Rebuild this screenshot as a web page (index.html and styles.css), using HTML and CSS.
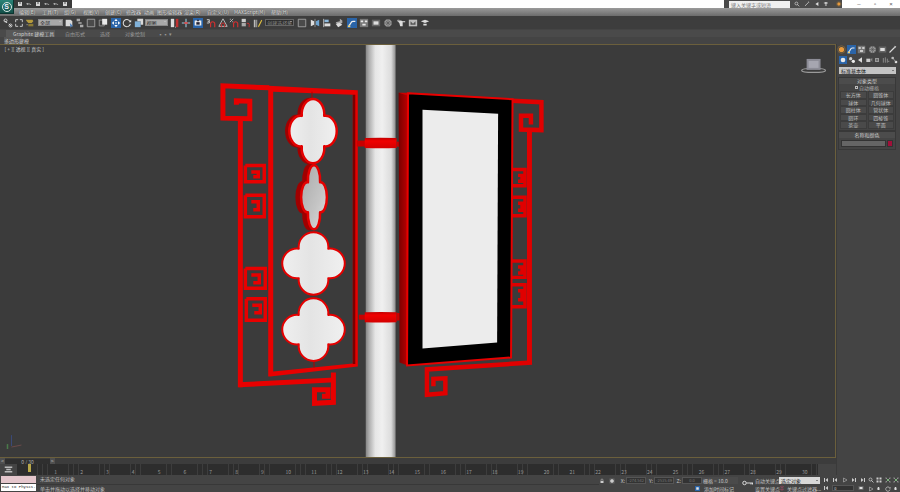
FILE: index.html
```html
<!DOCTYPE html>
<html lang="zh">
<head>
<meta charset="utf-8">
<title>3ds Max</title>
<link rel="stylesheet" href="styles.css">
</head>
<body>
<svg class="defs" width="0" height="0" aria-hidden="true">
  <defs>
    <linearGradient id="pole" x1="0" x2="1" y1="0" y2="0">
      <stop offset="0" stop-color="#858585"/><stop offset=".12" stop-color="#b0b0b0"/><stop offset=".32" stop-color="#e6e6e6"/><stop offset=".55" stop-color="#f0f0f0"/><stop offset=".85" stop-color="#dcdcdc"/><stop offset="1" stop-color="#8d8d8d"/>
    </linearGradient>
    <linearGradient id="band" x1="0" x2="0" y1="0" y2="1">
      <stop offset="0" stop-color="#c00000"/><stop offset=".3" stop-color="#f00000"/><stop offset="1" stop-color="#d40000"/>
    </linearGradient>
    <linearGradient id="side" x1="0" x2="1" y1="0" y2="0">
      <stop offset="0" stop-color="#7a0000"/><stop offset="1" stop-color="#c00000"/>
    </linearGradient>
    <linearGradient id="petal" x1="0" x2="1" y1="0" y2="0">
      <stop offset="0" stop-color="#efefef"/><stop offset=".45" stop-color="#e4e4e4"/><stop offset="1" stop-color="#f0f0f0"/>
    </linearGradient>
    <linearGradient id="petalgray" x1="0" x2="1" y1="0" y2="1">
      <stop offset="0" stop-color="#a8a8a8"/><stop offset=".6" stop-color="#c4c4c4"/><stop offset="1" stop-color="#dedede"/>
    </linearGradient>
    <symbol id="i-link" viewBox="0 0 12 12"><path d="M2 3l3 3M7 7l3 3" stroke="#ddd" stroke-width="1.2" fill="none"/><circle cx="3" cy="3" r="1.8" fill="none" stroke="#ddd"/><circle cx="9" cy="9" r="1.8" fill="none" stroke="#ddd"/></symbol>
    <symbol id="i-unlink" viewBox="0 0 12 12"><path d="M2 5V2h3M10 7v3H7M7 2h3v3M5 10H2V7" stroke="#ddd" fill="none"/></symbol>
    <symbol id="i-bind" viewBox="0 0 12 12"><path d="M1 2h8l1 2-2 2H4L2 4z" fill="#b59a3c"/><path d="M4 7h6v3H4z" fill="#8b7a35"/><path d="M2 8h1" stroke="#ddd"/></symbol>
    <symbol id="i-sel" viewBox="0 0 12 12"><path d="M2 2h6l2 2v6H2z" fill="#d8d8d8"/><path d="M7 6l4 4-2 0-1 2z" fill="#4a80c0"/></symbol>
    <symbol id="i-name" viewBox="0 0 12 12"><path d="M2 1h4v3H2zM4 5h4v2H4zM6 8h4v3H6z" fill="#aaa"/></symbol>
    <symbol id="i-rect" viewBox="0 0 12 12"><path d="M1.500 1.500h9v9h-9z" fill="#4a4a4a" stroke="#aaa"/></symbol>
    <symbol id="i-win" viewBox="0 0 12 12"><path d="M1.500 2.500h6v7h-6z" fill="none" stroke="#999"/><path d="M5 1h6v7H5z" fill="#e8e8e8"/></symbol>
    <symbol id="i-move" viewBox="0 0 12 12"><path d="M6 1l2 2.500H4zM6 11l2-2.500H4zM1 6l2.500-2v4zM11 6l-2.500-2v4z" fill="#fff"/><circle cx="6" cy="6" r="1" fill="#fff"/></symbol>
    <symbol id="i-rot" viewBox="0 0 12 12"><path d="M9.500 4A4.300 4.300 0 1 0 10 7" fill="none" stroke="#ddd" stroke-width="1.300"/><path d="M11 2v3H8z" fill="#ddd"/></symbol>
    <symbol id="i-scale" viewBox="0 0 12 12"><path d="M1 4h7v7H1z" fill="#7fb0d8"/><path d="M4 1h7v7H8V4H4z" fill="#d8d8d8"/></symbol>
    <symbol id="i-pivot" viewBox="0 0 12 12"><path d="M1 1h4v10H1z" fill="#ddd"/><path d="M7 1h3v10H7z" fill="#c03030"/><path d="M6 11h1" stroke="#ddd"/></symbol>
    <symbol id="i-man" viewBox="0 0 12 12"><path d="M6 1v10M1 6h10" stroke="#9ccbe0" stroke-width="1.300"/><path d="M4 6h4" stroke="#e04040" stroke-width="2"/></symbol>
    <symbol id="i-snapbox" viewBox="0 0 12 12"><path d="M2 3h8v6H2z" fill="#eee"/><path d="M4 5h4v3H4z" fill="#223"/><path d="M5 2h2v2H5z" fill="#223"/></symbol>
    <symbol id="i-snap3" viewBox="0 0 12 12"><path d="M1 2h3v2H2M4 4v2H1" stroke="#ddd" fill="none"/><path d="M5.500 11V7a2 2 0 0 1 5 0v4" stroke="#d03030" stroke-width="1.400" fill="none"/></symbol>
    <symbol id="i-angle" viewBox="0 0 12 12"><path d="M6 1l5 9H1z" fill="none" stroke="#ccc"/><path d="M4 11V8a2 2 0 0 1 4 0v3" stroke="#d03030" stroke-width="1.200" fill="none"/></symbol>
    <symbol id="i-pct" viewBox="0 0 12 12"><path d="M1 5l4-4" stroke="#ccc"/><path d="M1 1h1v1H1zM4 4h1v1H4z" fill="#ccc"/><path d="M5.500 11V7a2 2 0 0 1 5 0v4" stroke="#d03030" stroke-width="1.400" fill="none"/></symbol>
    <symbol id="i-spin" viewBox="0 0 12 12"><path d="M2 1h5v4H2z" fill="#ccc"/><path d="M2 6h5v4H2z" fill="#aaa"/><path d="M8 7a2 2 0 0 1 3 0v4" stroke="#d03030" fill="none"/></symbol>
    <symbol id="i-edit" viewBox="0 0 12 12"><path d="M1 2h2v9H1zM4 2h1v9H4z" fill="#bbb"/><path d="M6 10l4-8 1 1-4 8z" fill="#e0c040"/></symbol>
    <symbol id="i-mirror" viewBox="0 0 12 12"><path d="M1 2l4 2v4l-4 2z" fill="#ddd"/><path d="M11 2L7 4v4l4 2z" fill="#6ea4d0"/><path d="M6 1v10" stroke="#999"/></symbol>
    <symbol id="i-align" viewBox="0 0 12 12"><path d="M2 1v10" stroke="#ccc"/><path d="M3 2h5v3H3z" fill="#8cb8dc"/><path d="M3 6.500h7V10H3z" fill="#ddd"/></symbol>
    <symbol id="i-layer" viewBox="0 0 12 12"><path d="M7 1l3 2v3L7 4zM2 5l5-1 3 2-5 2z" fill="#aaa"/><path d="M2 7l5-1 3 2-5 3z" fill="#ddd"/></symbol>
    <symbol id="i-curve" viewBox="0 0 12 12"><path d="M0 0h12v12H0z" fill="#2a64a8"/><path d="M2 9c3-1 2-5 5-5h3" stroke="#eee" stroke-width="1.500" fill="none"/><path d="M1 9h3v2H1z" fill="#f0d070"/></symbol>
    <symbol id="i-schem" viewBox="0 0 12 12"><path d="M1 1h10v10H1z" fill="#777"/><path d="M2 3h3v2H2zM7 3h3v2H7zM4 7h4v2H4z" fill="#e8e8e8"/></symbol>
    <symbol id="i-mat" viewBox="0 0 12 12"><path d="M1 2h10v8H1z" fill="#666"/><path d="M3 4h6v4H3z" fill="#ddd"/></symbol>
    <symbol id="i-ball" viewBox="0 0 12 12"><circle cx="6" cy="6" r="4.500" fill="#999"/><path d="M3 3l6 6M9 3L3 9M6 1v10M1 6h10" stroke="#555" stroke-width=".7"/></symbol>
    <symbol id="i-tea" viewBox="0 0 12 12"><path d="M1 3h5l2 1h3v1H8v5H5L4 6z" fill="#ddd"/><path d="M2 2h2v2H2z" fill="#999"/></symbol>
    <symbol id="i-rend" viewBox="0 0 12 12"><path d="M1 2h10v8H1z" fill="#bbb"/><path d="M3 4l3 3 3-3v4H3z" fill="#555"/></symbol>
    <symbol id="i-cup" viewBox="0 0 12 12"><path d="M1 4l5-2 5 2-5 2zM4 7h4v2H4z" fill="#ddd"/></symbol>
    <symbol id="i-sun" viewBox="0 0 12 12"><circle cx="6" cy="6" r="3.500" fill="#e89a3c"/><circle cx="6" cy="6" r="5" fill="none" stroke="#8a6a3a"/></symbol>
    <symbol id="i-wrench" viewBox="0 0 12 12"><path d="M2 10l7-7" stroke="#ddd" stroke-width="1.500"/><path d="M8 1l3 1-1 2z" fill="#ddd"/></symbol>
    <symbol id="i-sphere" viewBox="0 0 12 12"><path d="M0 0h12v12H0z" fill="#2a64a8"/><circle cx="6" cy="6" r="3.500" fill="#e8e8e8"/></symbol>
    <symbol id="i-shapes" viewBox="0 0 12 12"><circle cx="4" cy="4" r="2.500" fill="#ccc"/><circle cx="8" cy="8" r="2.500" fill="#eee"/></symbol>
    <symbol id="i-lamp" viewBox="0 0 12 12"><path d="M3 6l6-4v8z" fill="#ddd"/></symbol>
    <symbol id="i-cam" viewBox="0 0 12 12"><path d="M2 4h6v5H2z" fill="#ccc"/><path d="M8 5l3-2v6z" fill="#888"/></symbol>
    <symbol id="i-help" viewBox="0 0 12 12"><path d="M3 3h6v6H3z" fill="#999"/><path d="M5 5h2v2H5z" fill="#444"/></symbol>
    <symbol id="i-space" viewBox="0 0 12 12"><path d="M2 3v7M5 2v8M8 4v6" stroke="#aaa"/><path d="M9 8h2" stroke="#aaa"/></symbol>
    <symbol id="i-sys" viewBox="0 0 12 12"><circle cx="4" cy="3" r="2" fill="#bbb"/><circle cx="9" cy="9" r="2" fill="#ddd"/><path d="M4 3l5 6" stroke="#bbb"/></symbol>
    <symbol id="i-play" viewBox="0 0 12 12"><path d="M2 2h2v8H2zM10 2v8L5 6z" fill="#ccc"/></symbol>
    <symbol id="i-next" viewBox="0 0 12 12"><path d="M10 2h-2v8h2zM2 2v8l5-4z" fill="#ccc"/></symbol>
    <symbol id="i-tri" viewBox="0 0 12 12"><path d="M3 2v8l7-4z" fill="none" stroke="#ccc"/></symbol>
    <symbol id="i-zoom" viewBox="0 0 12 12"><circle cx="5" cy="5" r="3" fill="none" stroke="#ddd" stroke-width="1.300"/><path d="M7 7l4 4" stroke="#ddd" stroke-width="1.500"/></symbol>
    <symbol id="i-four" viewBox="0 0 12 12"><path d="M1 1h4v4H1zM7 1h4v4H7zM1 7h4v4H1zM7 7h4v4H7z" fill="#ccc"/></symbol>
    <symbol id="i-ext" viewBox="0 0 12 12"><path d="M1 1l3 1-2 2zM11 1l-1 3-2-2zM1 11l1-3 2 2zM11 11l-3-1 2-2z" fill="#ddd"/><path d="M4 4h4v4H4z" fill="#7ab07a"/></symbol>
    <symbol id="i-pan" viewBox="0 0 12 12"><path d="M3 5V3h1v2-3h1v3-3h1v3-2h1v5H4L2 6z" fill="#ddd"/></symbol>
    <symbol id="i-key" viewBox="0 0 24 12"><circle cx="5" cy="6" r="3.500" fill="none" stroke="#e8e8e8" stroke-width="1.800"/><path d="M9 6h13M18 6v3M21 6v3" stroke="#e8e8e8" stroke-width="1.800"/></symbol>
    <symbol id="i-qat" viewBox="0 0 12 12"><path d="M2 2h8v8H2z" fill="#d5d5d5"/><path d="M4 3h4v2H4z" fill="#555"/></symbol>
    <symbol id="i-undo" viewBox="0 0 12 12"><path d="M3 7a4 3 0 0 1 7 1" stroke="#cfcfcf" stroke-width="1.400" fill="none"/><path d="M1 4l4 1-3 3z" fill="#cfcfcf"/></symbol>
    <symbol id="i-lock" viewBox="0 0 12 12"><path d="M3 6h6v4H3z" fill="#ccc"/><path d="M4 6V4a2 2 0 0 1 4 0v2" stroke="#ccc" fill="none"/></symbol>
    <symbol id="i-cross" viewBox="0 0 12 12"><path d="M1 1h10v10H1z" fill="#666"/><path d="M6 2v8M2 6h8" stroke="#eee" stroke-width="2"/></symbol>
    <symbol id="i-mark" viewBox="0 0 12 12"><path d="M0 0h12v12H0z" fill="#2a64a8"/><path d="M3 3h6v6H3z" fill="#e4e4e4"/></symbol>
    <symbol id="i-filter" viewBox="0 0 12 12"><path d="M2 3l4 2 4-2M2 8l4 2 4-2" stroke="#b04a6a" fill="none"/><path d="M6 1v10" stroke="#b04a6a"/></symbol>
    <symbol id="i-time" viewBox="0 0 12 12"><path d="M1 2h10v2H1zM3 5h6v2H3zM1 8h10v2H1z" fill="#bbb"/></symbol>
  </defs>
</svg>

<div class="app">
  <header class="titlebar">
    <div class="qat">
      <svg class="q"><use href="#i-qat"/></svg><svg class="q"><use href="#i-undo"/></svg><svg class="q"><use href="#i-qat"/></svg><svg class="q"><use href="#i-undo"/></svg><svg class="q"><use href="#i-undo"/></svg><svg class="q"><use href="#i-qat"/></svg>
    </div>
    <div class="search">
      <span class="searchbox">键入关键字或短语</span>
      <svg class="q"><use href="#i-zoom"/></svg><svg class="q"><use href="#i-wrench"/></svg><svg class="q"><use href="#i-lamp"/></svg><svg class="q"><use href="#i-cup"/></svg><svg class="q helpic"><use href="#i-sun"/></svg>
    </div>
    <div class="winctl"><span>–</span><span>▫</span><span>×</span></div>
  </header>
  <div class="logo" aria-label="3ds Max"><span>S</span></div>

  <nav class="menu">
    <span class="m1">编辑(E)</span><span class="m2">工具(T)</span><span class="m3">组(G)</span><span class="m4">视图(V)</span><span class="m5">创建(C)</span><span class="m6">修改器</span><span class="m7">动画</span><span class="m8">图形编辑器</span><span class="m9">渲染(R)</span><span class="m10">自定义(U)</span><span class="m11">MAXScript(M)</span><span class="m12">帮助(H)</span>
  </nav>

  <div class="toolbar">
    <svg class="ic"><use href="#i-link"/></svg><svg class="ic"><use href="#i-unlink"/></svg><svg class="ic"><use href="#i-bind"/></svg>
    <span class="combo c1">全部<i></i></span>
    <svg class="ic"><use href="#i-sel"/></svg><svg class="ic"><use href="#i-name"/></svg><svg class="ic"><use href="#i-rect"/></svg><svg class="ic"><use href="#i-win"/></svg>
    <svg class="ic on sp"><use href="#i-move"/></svg><svg class="ic"><use href="#i-rot"/></svg><svg class="ic"><use href="#i-scale"/></svg>
    <span class="combo c2">视图<i></i></span>
    <svg class="ic"><use href="#i-pivot"/></svg><svg class="ic"><use href="#i-man"/></svg><svg class="ic on nudge"><use href="#i-snapbox"/></svg>
    <svg class="ic nudge2"><use href="#i-snap3"/></svg><svg class="ic"><use href="#i-angle"/></svg><svg class="ic"><use href="#i-pct"/></svg><svg class="ic"><use href="#i-spin"/></svg><svg class="ic nudge2"><use href="#i-edit"/></svg>
    <span class="combo c3">创建选择集<i></i></span>
    <svg class="ic wide"><use href="#i-rect"/></svg><svg class="ic wide"><use href="#i-mirror"/></svg><svg class="ic wide"><use href="#i-align"/></svg><svg class="ic wide"><use href="#i-layer"/></svg>
    <svg class="ic on sp2"><use href="#i-curve"/></svg><svg class="ic wide"><use href="#i-schem"/></svg><svg class="ic wide"><use href="#i-mat"/></svg><svg class="ic wide"><use href="#i-ball"/></svg><svg class="ic wide"><use href="#i-tea"/></svg><svg class="ic wide"><use href="#i-rend"/></svg><svg class="ic wide"><use href="#i-cup"/></svg>
  </div>

  <div class="ribbon">
    <span class="tab active">Graphite 建模工具</span><span class="tab t2">自由形式</span><span class="tab t3">选择</span><span class="tab t4">对象绘制</span><span class="tab t5">▪▪ ▾</span>
  </div>
  <div class="subribbon"><span class="subtab">多边形建模</span></div>

  <div class="workspace">
    <main class="viewport">
      <svg class="scene" viewBox="0 44 836 414" role="img" aria-label="场景">
        <rect x="366" y="44" width="30" height="414" fill="url(#pole)"/>

        <!-- left lattice -->
        <g fill="none" stroke="#e80000" stroke-width="3.500">
          <path d="M269 87L222.500 85V117.500L249.500 118V100.500L236 100V104" stroke-width="5"/>
          <path d="M240 118V388" stroke-width="5"/>
          <path d="M238 385.500L335 380.500" stroke-width="5"/>
          <path d="M245 165H264V181.500H245V165M251 171.500H258V176.500H253"/>
          <path d="M245 195H264V216.500H245V195M251 201.500H258V209.500H253"/>
          <path d="M245 268.500H265V288.500H245V268.500M251 275H259V283H253"/>
          <path d="M246 299H265V320.500H246V299M252 305.500H260V313H254"/>
          <path d="M333.500 373V403L314.500 404V390.500H328V397H322" stroke-width="5"/>
        </g>
        <path d="M268 85L358 89.500V367L270 377H268ZM273 91V372L353 364V94Z" fill="#e80000" fill-rule="evenodd"/>
        <path d="M353 94H355.500V364.500H353Z" fill="#7a0000"/>
        <path d="M312 91V99M314 361V368" stroke="#b00000" stroke-width="1"/>

        <path class="foil-back" transform="translate(-3 0)" d="M301.720 115.220A11.350 15.370 0 1 1 324.280 115.220A11.350 15.370 0 1 1 324.280 145.780A11.350 15.370 0 1 1 301.720 145.780A11.350 15.370 0 1 1 301.720 115.220Z"/>
        <path class="foil-front thick" d="M301.720 115.220A11.350 15.370 0 1 1 324.280 115.220A11.350 15.370 0 1 1 324.280 145.780A11.350 15.370 0 1 1 301.720 145.780A11.350 15.370 0 1 1 301.720 115.220Z"/>
        <path class="foil-back" transform="translate(-4.500 0)" d="M307.900 181.960A6.150 15.140 0 1 1 320.100 181.960A6.150 15.140 0 1 1 320.100 212.040A6.150 15.140 0 1 1 307.900 212.040A6.150 15.140 0 1 1 307.900 181.960Z"/>
        <path class="foil-gray" d="M307.900 181.960A6.150 15.140 0 1 1 320.100 181.960A6.150 15.140 0 1 1 320.100 212.040A6.150 15.140 0 1 1 307.900 212.040A6.150 15.140 0 1 1 307.900 181.960Z"/>
        <path class="foil-front" d="M298.700 248.700A14.900 14.900 0 1 1 328.300 248.700A14.900 14.900 0 1 1 328.300 278.300A14.900 14.900 0 1 1 298.700 278.300A14.900 14.900 0 1 1 298.700 248.700Z"/>
        <path class="foil-front" d="M298.700 315.200A14.900 14.900 0 1 1 328.300 315.200A14.900 14.900 0 1 1 328.300 344.800A14.900 14.900 0 1 1 298.700 344.800A14.900 14.900 0 1 1 298.700 315.200Z"/>

        <!-- clamps -->
        <path d="M357 140L366 140V146H357Z" fill="#c80000"/>
        <path d="M365 137.500Q381 137 397 137.500V147.500Q381 148 365 147.500Z" fill="url(#band)"/>
        <path d="M397 141L405 142V147L397 146Z" fill="#c80000"/>
        <path d="M359 315H366V320H359Z" fill="#c80000"/>
        <path d="M365 312.500Q381 312 397 312.500V322.500Q381 323 365 322.500Z" fill="url(#band)"/>
        <path d="M397 313L404 314V320L397 321Z" fill="#c80000"/>

        <!-- right lightbox -->
        <g fill="none" stroke="#e00000" stroke-width="3.500">
          <path d="M513 100L542.500 101.500V129.500L522 129V115H532V124" stroke-width="4.500"/>
          <path d="M530.500 130V364" stroke-width="5"/>
          <path d="M533 363L427.500 370V395.500L446 394V379L434 379.500V387" stroke-width="4.500"/>
          <path d="M513 169H526V185.500H513M519 175H523V181H519"/>
          <path d="M513 197H526V215.500H513M519 203H523V210H519"/>
          <path d="M513 261H526V277.500H513M519 267H523V273H519"/>
          <path d="M513 285H526V307H513M519 291H523V300H519"/>
        </g>
        <path d="M399 92L409 92.500L408 366L400 363Z" fill="url(#side)"/>
        <path d="M399 92L409 92L513 98L409 95Z" fill="#d00000"/>
        <path d="M408.500 92.500L513.500 98.500L512 358L407.500 366Z" fill="#000" stroke="#e80000" stroke-width="2"/>
        <path d="M423 109L499 113L498 343L423 349Z" fill="#ececec"/>

        <!-- view cube -->
        <ellipse cx="816" cy="69.500" rx="12" ry="2" fill="#3b3b3b" stroke="#9a9a9a" stroke-width="1.200"/>
        <path d="M809 58H823V69H809Z" fill="#8c8c96"/>
        <path d="M811 60H821V67H811Z" fill="#a6a6b0"/>
        <!-- axis -->
        <path d="M10 447V436" stroke="#3a4a7a" stroke-width="1"/>
        <path d="M6 450V445" stroke="#4a7a4a" stroke-width="1.500"/>
        <path d="M10 448L20 446" stroke="#6a4a4a" stroke-width="1"/>
        <text x="3" y="50" class="vp-label">[ + ][ 透视 ][ 真实 ]</text>
      </svg>
    </main>

    <aside class="panel">
      <div class="cmd-tabs">
        <svg class="pi"><use href="#i-sun"/></svg><svg class="pi"><use href="#i-curve"/></svg><svg class="pi"><use href="#i-schem"/></svg><svg class="pi"><use href="#i-ball"/></svg><svg class="pi"><use href="#i-mat"/></svg><svg class="pi"><use href="#i-wrench"/></svg>
      </div>
      <div class="cmd-sub">
        <svg class="pj"><use href="#i-sphere"/></svg><svg class="pj"><use href="#i-shapes"/></svg><svg class="pj"><use href="#i-lamp"/></svg><svg class="pj"><use href="#i-cam"/></svg><svg class="pj"><use href="#i-help"/></svg><svg class="pj"><use href="#i-space"/></svg><svg class="pj"><use href="#i-sys"/></svg>
      </div>
      <div class="dropdown">标准基本体<i></i></div>
      <section class="rollout">
        <h2>对象类型</h2>
        <label class="check"><b></b>自动栅格</label>
        <div class="btns">
          <span>长方体</span><span>圆锥体</span><span>球体</span><span>几何球体</span><span>圆柱体</span><span>管状体</span><span>圆环</span><span>四棱锥</span><span>茶壶</span><span>平面</span>
        </div>
      </section>
      <section class="rollout second">
        <h2>名称和颜色</h2>
        <div class="namerow"><span class="nameinput"></span><span class="swatch"></span></div>
      </section>
    </aside>

    <div class="slider"><span class="arrow">&lt;</span><span class="pos">0 / 30</span><span class="arrow">&gt;</span></div>

    <div class="track">
      <svg class="trackic"><use href="#i-time"/></svg>
      <div class="ruler">
        <span></span><span>1</span><span>2</span><span>3</span><span>4</span><span>5</span><span>6</span><span>7</span><span>8</span><span>9</span><span>10</span><span>11</span><span>12</span><span>13</span><span>14</span><span>15</span><span>16</span><span>17</span><span>18</span><span>19</span><span>20</span><span>21</span><span>22</span><span>23</span><span>24</span><span>25</span><span>26</span><span>27</span><span>28</span><span>29</span><span>30</span>
      </div>
      <b class="marker"></b>
    </div>
  </div>

  <footer class="status">
    <div class="script"><span class="pink"></span><span class="mono">Max to Physcs.</span></div>
    <div class="prompt"><span>未选定任何对象</span><span>单击并拖动以选择并移动对象</span></div>
    <div class="coords">
      <div class="coordrow">
        <svg class="s"><use href="#i-lock"/></svg><svg class="s"><use href="#i-cross"/></svg>
        <span class="axis">X:</span><span class="field">-274.542</span><span class="axis">Y:</span><span class="field">-2535.49</span><span class="axis">Z:</span><span class="field">0.0</span>
      </div>
    </div>
    <div class="gridinfo">
      <span class="gridbox">栅格 = 10.0</span>
      <span class="timetag"><svg class="s"><use href="#i-mark"/></svg>添加时间标记</span>
    </div>
    <svg class="keyic"><use href="#i-key"/></svg>
    <div class="keys">
      <div class="keyrow"><span class="kl">自动关键点</span><span class="keycombo">选定对象<i></i></span></div>
      <div class="keyrow"><span class="kl">设置关键点</span><svg class="s"><use href="#i-filter"/></svg><span class="kf">关键点过滤器...</span></div>
    </div>
    <div class="play">
      <div class="prow"><svg class="s"><use href="#i-play"/></svg><svg class="s"><use href="#i-play"/></svg><svg class="s"><use href="#i-tri"/></svg><svg class="s"><use href="#i-next"/></svg><svg class="s"><use href="#i-next"/></svg></div>
      <div class="prow"><svg class="s"><use href="#i-play"/></svg><span class="frame">0</span><svg class="s"><use href="#i-mat"/></svg></div>
    </div>
    <div class="nav">
      <svg class="s"><use href="#i-zoom"/></svg><svg class="s"><use href="#i-four"/></svg><svg class="s"><use href="#i-ext"/></svg><svg class="s"><use href="#i-ext"/></svg>
      <svg class="s"><use href="#i-tri"/></svg><svg class="s"><use href="#i-pan"/></svg><svg class="s"><use href="#i-rot"/></svg><svg class="s"><use href="#i-pan"/></svg>
    </div>
  </footer>
</div>
</body>
</html>
```
FILE: styles.css
```css
* { box-sizing: border-box; }
html, body { margin: 0; padding: 0; }
body { width: 900px; height: 492px; overflow: hidden; background: #444; font-family: "Noto Sans CJK SC", "Noto Sans", sans-serif; font-size: 5px; color: #c4c4c4; }
.defs { display: block; height: 0; width: 0; }
.app { position: relative; width: 900px; height: 492px; display: flex; flex-direction: column; overflow: hidden; }
i { font-style: normal; }

.titlebar { height: 8px; background: #fff; display: flex; align-items: stretch; padding-left: 14px; }
.qat { width: 58px; height: 8px; background: #3a3a3a; display: flex; align-items: center; gap: 3px; padding-left: 3px; }
.q { width: 6px; height: 6px; }
.search { margin-left: 652px; width: 118px; height: 8px; background: #4a4a4a; display: flex; align-items: center; gap: 4px; padding-left: 5px; }
.searchbox { width: 63px; height: 7px; background: #f0f0f0; color: #777; font-size: 5px; line-height: 7px; padding-left: 2px; white-space: nowrap; overflow: hidden; }
.helpic { margin-left: 3px; }
.winctl { display: flex; width: 58px; padding-left: 9px; font-family: "Liberation Sans", sans-serif; font-size: 6px; line-height: 8px; color: #555; }
.winctl span { width: 16px; text-align: center; }
.logo { position: absolute; left: 0; top: 0; width: 14px; height: 14px; background: linear-gradient(#2a8478, #134e48); display: flex; align-items: center; justify-content: center; border-right: 1px solid #0c3530; border-bottom: 1px solid #0c3530; }
.logo span { width: 10px; height: 10px; border: 1px solid #d8e8e4; border-radius: 50%; color: #eef; font: bold 7px/8px "Liberation Sans", sans-serif; text-align: center; }

.menu { height: 8px; background: linear-gradient(#9a9a9a, #6c6c6c); display: flex; line-height: 8px; color: #dedede; font-size: 5px; white-space: nowrap; padding-left: 19px; text-shadow: 0 0 1px #444; }
.menu span { display: block; }
.m1 { width: 23px; } .m2 { width: 22px; } .m3 { width: 19px; } .m4 { width: 22px; } .m5 { width: 21px; } .m6 { width: 18px; } .m7 { width: 13px; } .m8 { width: 27px; } .m9 { width: 23px; } .m10 { width: 27px; } .m11 { width: 37px; } .m12 { width: 20px; }

.toolbar { height: 13px; background: #3d3d3d; display: flex; align-items: center; padding-left: 2px; }
.ic { width: 10px; height: 10px; margin: 0 .7px; flex: none; }
.ic.on { background: #2a64a8; }
.ic.sp { margin-left: 2.700px; }
.ic.sp2 { margin-left: 2.300px; }
.ic.nudge { margin-left: 1.900px; }
.ic.nudge2 { margin-left: 2.200px; }
.ic.wide { margin: 0 1.100px; }
.combo { height: 7px; background: #3a3a3a; border: 1px solid #888; color: #ddd; line-height: 5px; font-size: 5px; padding-left: 1px; position: relative; flex: none; white-space: nowrap; overflow: hidden; }
.combo i { position: absolute; right: 1px; top: 1px; border: 1.500px solid transparent; border-top-color: #ccc; }
.c1 { width: 25px; background: #a8a8a8; color: #222; margin-left: 1.800px; }
.c2 { width: 23px; background: #a8a8a8; color: #222; margin-right: 1.300px; }
.c3 { width: 29px; background: #2e2e2e; color: #888; border-color: #666; margin: 0 1.900px 0 1.300px; }

.ribbon { height: 8px; background: #4a4a4a; display: flex; line-height: 8px; font-size: 5px; padding-left: 6px; color: #999; white-space: nowrap; border-top: 1px solid #444; }
.tab.active { width: 49px; background: #585858; color: #ccc; padding-left: 7px; }
.t2 { margin-left: 10px; width: 35px; }
.t3 { width: 25px; }
.t4 { width: 33px; }
.subribbon { height: 7px; background: #444; line-height: 7px; padding-left: 4px; }
.subtab { display: block; width: 18px; background: #555; color: #ccc; text-align: center; white-space: nowrap; }

.workspace { display: grid; grid-template-columns: 836px 64px; grid-template-rows: 414px 6px 11px; height: 431px; }
.viewport { background: #3b3b3b; border-top: 1px solid #6b5f3c; border-right: 1px solid #6b5f3c; border-bottom: 1px solid #6b5f3c; overflow: hidden; }
.scene { display: block; width: 835px; height: 412px; }
.vp-label { font-size: 5px; fill: #c8c8c8; font-family: "Noto Sans CJK SC", sans-serif; }
.foil-front { fill: url(#petal); stroke: #e40000; stroke-width: 2; stroke-linejoin: round; }
.foil-front.thick { stroke-width: 2.500; }
.foil-back { fill: #a00000; stroke: #a00000; stroke-width: 2.500; stroke-linejoin: round; }
.foil-gray { fill: url(#petalgray); stroke: #e40000; stroke-width: 2.500; stroke-linejoin: round; }

.panel { grid-column: 2; grid-row: 1 / 4; background: #444; padding: 0 1px 0 0; display: flex; flex-direction: column; border-left: 1px solid #3a3a3a; }
.cmd-tabs { display: flex; height: 10px; gap: 1.200px; align-items: center; }
.pi { width: 9px; height: 9px; flex: none; }
.cmd-sub { display: flex; height: 9px; margin-top: 1px; padding-left: 2px; align-items: center; }
.pj { width: 8px; height: 8px; margin-right: .5px; flex: none; }
.dropdown { margin-top: 3px; height: 7px; background: #c4c4c4; color: #222; line-height: 7px; padding-left: 2px; position: relative; margin-left: 2px; width: 57px; }
.dropdown i { position: absolute; right: 2px; top: 3px; border: 1.500px solid transparent; border-top-color: #333; }
.rollout { margin: 3px 0 0 1px; width: 58px; border: 1px solid #383838; }
.rollout h2 { margin: 0; height: 6px; font-size: 5px; line-height: 6px; font-weight: normal; text-align: center; color: #c8c8c8; background: #4c4c4c; }
.check { display: flex; align-items: center; justify-content: center; height: 7px; gap: 1px; color: #aaa; }
.check b { width: 3px; height: 3px; border: 1px solid #bbb; display: block; }
.btns { display: grid; grid-template-columns: 1fr 1fr; grid-auto-rows: 7.500px; gap: 0 1px; padding: 0 1px 1px; }
.btns span { background: #4a4a4a; border: 1px solid #3c3c3c; text-align: center; line-height: 5.500px; color: #bbb; white-space: nowrap; }
.rollout.second { margin-top: 0; }
.namerow { display: flex; gap: 1px; padding: 2px; }
.nameinput { width: 47px; height: 7px; background: #656565; border: 1px solid #333; }
.swatch { width: 6px; height: 7px; background: #a0103a; border: 1px solid #333; }

.slider { grid-column: 1; grid-row: 2; display: flex; align-items: center; background: #3c3c3c; line-height: 6px; }
.arrow { width: 5px; text-align: center; background: #4f4f4f; color: #ccc; height: 6px; }
.pos { width: 45px; background: #2f2f2f; text-align: center; color: #aaa; height: 5px; line-height: 5px; }

.track { grid-column: 1; grid-row: 3; display: flex; background: #444; position: relative; }
.trackic { width: 17px; height: 11px; padding: 1px 3px; }
.ruler { display: grid; grid-template-columns: repeat(31, 25.830px); flex: none; background: #2d2d2d repeating-linear-gradient(90deg, transparent 0 4.700px, #3d3d3d 4.700px 5.160px); align-items: end; color: #9a9a9a; line-height: 6px; font-size: 5px; }
.ruler span { text-align: center; }
.marker { position: absolute; left: 28px; top: 0; width: 3px; height: 8px; background: #b8a84a; display: block; }

.status { height: 17px; display: flex; background: #444; position: relative; }
.script { width: 36px; padding: 1px 0 0 1px; display: flex; flex-direction: column; gap: 1px; flex: none; }
.pink { height: 7px; background: #e4c6cc; }
.mono { height: 7px; background: #fff; color: #111; font: 4px/7px "Liberation Mono", monospace; white-space: nowrap; overflow: hidden; padding-left: 1px; }
.prompt { width: 562px; margin-left: 1px; display: flex; flex-direction: column; flex: none; line-height: 8px; color: #bdbdbd; }
.prompt span { height: 8.500px; padding-left: 3px; }
.prompt span + span { border-top: 1px solid #383838; line-height: 7px; }
.s { width: 6px; height: 6px; flex: none; }
.coords { width: 100px; flex: none; padding-top: 2px; }
.coordrow { display: flex; align-items: center; gap: 1px; line-height: 7px; }
.coordrow .s { margin-right: 3px; }
.axis { width: 5px; text-align: right; margin-left: 1px; flex: none; }
.field { width: 20px; height: 7px; background: #333; border: 1px solid #555; color: #777; font-size: 4px; line-height: 5px; text-align: center; flex: none; overflow: hidden; }
.gridinfo { width: 44px; display: flex; flex-direction: column; flex: none; margin-left: -4px; }
.gridbox { margin: 2px 0 0 7px; width: 36px; height: 7px; background: #4a4a4a; line-height: 7px; padding-left: 1px; white-space: nowrap; }
.timetag { display: flex; align-items: center; height: 8px; gap: 4px; white-space: nowrap; }
.timetag .s { width: 5px; height: 5px; }
.keyic { width: 12px; height: 6px; margin: 5px 0 0 3px; flex: none; }
.keys { width: 69px; padding: 1px 0 0 1px; flex: none; }
.keyrow { display: flex; align-items: center; height: 8px; white-space: nowrap; }
.kl { width: 24px; flex: none; }
.keycombo { width: 41px; height: 7px; background: #d8d8d8; color: #222; line-height: 7px; padding-left: 2px; position: relative; flex: none; }
.keycombo i { position: absolute; right: 2px; top: 3px; border: 1.500px solid transparent; border-top-color: #333; }
.kf { margin-left: 2px; }
.play { width: 45px; flex: none; padding: 1px 0 0 0; }
.prow { display: flex; align-items: center; gap: 3.300px; height: 8px; }
.frame { width: 22px; height: 6px; background: #333; border: 1px solid #555; line-height: 4px; font-size: 4px; padding-left: 1px; }
.nav { width: 32px; flex: none; display: grid; grid-template-columns: repeat(4, 6px); gap: 2px 2.300px; padding-top: 2px; }
```
